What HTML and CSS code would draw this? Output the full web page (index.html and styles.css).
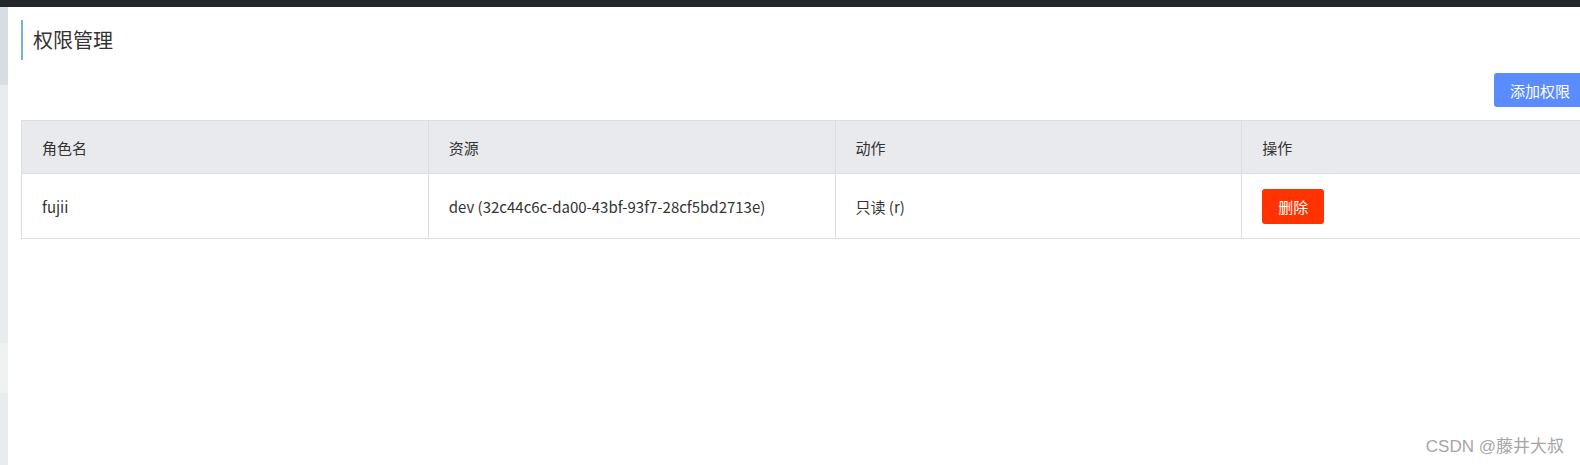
FILE: index.html
```html
<!DOCTYPE html>
<html lang="zh-CN">
<head>
<meta charset="utf-8">
<title>权限管理</title>
<link rel="stylesheet" href="styles.css">
</head>
<body>
<div class="topbar"></div>
<div class="layout">
  <aside class="sidebar">
    <div class="side-a"></div>
    <div class="side-b"></div>
    <div class="side-c"></div>
    <div class="side-d"></div>
  </aside>
  <main class="main">
    <h2 class="page-title">权限管理</h2>
    <div class="toolbar">
      <button class="btn btn-primary">添加权限</button>
    </div>
    <table class="table">
      <thead>
        <tr>
          <th>角色名</th>
          <th>资源</th>
          <th>动作</th>
          <th>操作</th>
        </tr>
      </thead>
      <tbody>
        <tr>
          <td class="txt">fujii</td>
          <td class="txt">dev (32c44c6c-da00-43bf-93f7-28cf5bd2713e)</td>
          <td class="txt">只读 (r)</td>
          <td><button class="btn btn-danger">删除</button></td>
        </tr>
      </tbody>
    </table>
  </main>
</div>
<div class="watermark">CSDN @藤井大叔</div>
</body>
</html>
```
FILE: styles.css
```css
html, body {
  margin: 0;
  padding: 0;
  overflow: hidden;
  background: #fff;
}
body {
  width: 1580px;
  height: 465px;
  position: relative;
  font-family: "Noto Sans CJK SC", sans-serif;
  font-size: 15px;
  color: #333;
}
.topbar {
  height: 7px;
  background: #23272b;
}
.layout {
  display: flex;
  height: 458px;
}
.sidebar {
  width: 8px;
  flex: none;
  display: flex;
  flex-direction: column;
}
.side-a { height: 78px; background: #d8dce3; }
.side-b { height: 258px; background: #e8ebf0; }
.side-c { height: 50px; background: #f0f1f5; }
.side-d { flex: 1; background: #e8ebf0; }
.main {
  flex: none;
  width: 1640px;
  padding: 13px 0 0 13px;
}
.page-title {
  margin: 0;
  height: 40px;
  line-height: 40px;
  border-left: 2px solid #7ab0dc;
  padding-left: 10px;
  font-size: 20px;
  font-weight: normal;
  color: #333;
}
.toolbar {
  width: 1565px;
  display: flex;
  justify-content: flex-end;
  margin-top: 13px;
}
.btn {
  border: none;
  border-radius: 3px;
  color: #fff;
  font-family: "Noto Sans CJK SC", sans-serif;
  cursor: pointer;
}
.btn-primary {
  height: 34px;
  padding: 0 16px;
  font-size: 15px;
  background: #5b8cff;
}
.btn-danger {
  height: 35px;
  width: 62px;
  padding: 0;
  font-size: 15px;
  background: #ff3300;
  display: block;
}
.table {
  margin-top: 13px;
  border-collapse: collapse;
  table-layout: fixed;
  width: 1628px;
}
.table th, .table td {
  border: 1px solid #dcdee2;
  padding: 0 20px;
  text-align: left;
  font-weight: normal;
  font-size: 15px;
  color: #333;
}
.table th {
  height: 52px;
  background: #e9eaee;
}
.table td {
  height: 64px;
}
.watermark {
  position: absolute;
  right: 16px;
  bottom: 8px;
  font-family: "Liberation Sans", "Noto Sans CJK SC", sans-serif;
  font-size: 17px;
  color: #a6a6a6;
}
```
